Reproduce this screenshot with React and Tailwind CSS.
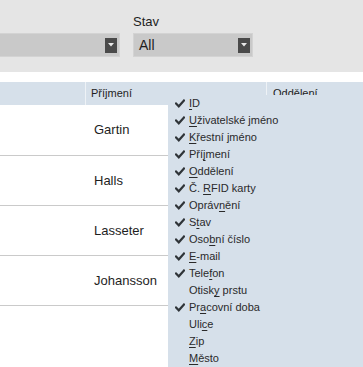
import React from "react";

const columns = [
  { label: "ID", checked: true },
  { label: "Uživatelské jméno", checked: true },
  { label: "Křestní jméno", checked: true },
  { label: "Příjmení", checked: true, idx: 3 },
  { label: "Oddělení", checked: true },
  { label: "Č. RFID karty", checked: true, idx: 3 },
  { label: "Oprávnění", checked: true, idx: 5 },
  { label: "Stav", checked: true, idx: 1 },
  { label: "Osobní číslo", checked: true, idx: 3 },
  { label: "E-mail", checked: true },
  { label: "Telefon", checked: true, idx: 4 },
  { label: "Otisky prstu", checked: false, idx: 5 },
  { label: "Pracovní doba", checked: true, idx: 2 },
  { label: "Ulice", checked: false, idx: 3 },
  { label: "Zip", checked: false },
  { label: "Město", checked: false },
];

const rows = ["Gartin", "Halls", "Lasseter", "Johansson"];

const Check = () => (
  <svg width="10" height="9" viewBox="0 0 10 9" className="shrink-0">
    <path d="M1 4.5 L3.8 7.3 L9 1.5" fill="none" stroke="#2f3438" strokeWidth="2.2" strokeLinecap="square" />
  </svg>
);

// underline the access-key letter
const Mnemonic = ({ label, idx = 0 }) => (
  <span>
    {label.slice(0, idx)}
    <span className="underline underline-offset-[2px]">{label[idx]}</span>
    {label.slice(idx + 1)}
  </span>
);

const Select = ({ value, className }) => (
  <div className={`h-[24px] bg-[#c9c9c9] border border-[#d3d3d3] flex items-center justify-between pl-[5px] pr-[2px] ${className}`}>
    <span className="text-[14px] text-[#1e1e1e]">{value}</span>
    <div className="w-[12px] h-[15px] bg-[#4a4a4a] flex items-center justify-center">
      <svg width="6" height="4" viewBox="0 0 6 4">
        <path d="M0 0 L6 0 L3 3.5 Z" fill="#e8e8e8" />
      </svg>
    </div>
  </div>
);

export default function App() {
  return (
    <div
      className="relative w-[363px] h-[367px] overflow-hidden bg-white"
      style={{ fontFamily: '"Liberation Sans", Arial, sans-serif' }}
    >
      {/* filter bar */}
      <div className="h-[72px] bg-[#e5e5e5] flex items-start gap-[13px] pt-[14px]">
        <div className="flex flex-col gap-[3px] -ml-[20px]">
          <div className="h-[16px]" />
          <Select value="" className="w-[140px]" />
        </div>
        <div className="flex flex-col gap-[3px]">
          <div className="h-[16px] text-[13px] leading-[16px] text-[#1e1e1e]">Stav</div>
          <Select value="All" className="w-[120px]" />
        </div>
      </div>
      <div className="h-[10px] bg-white" />

      {/* table */}
      <div className="flex h-[23px] bg-[#d6e0ea] text-[11px] text-[#1e1e1e]">
        <div className="w-[85px]" />
        <div className="w-[181px] border-l border-[#eef2f6] flex items-center pl-[5px]">Příjmení</div>
        <div className="flex-1 border-l border-[#eef2f6] flex items-center pl-[6px]">Oddělení</div>
      </div>
      {rows.map((name, i) => (
        <div
          key={name}
          className={`flex items-center border-b border-[#cacaca] ${i === 0 ? "h-[51px]" : "h-[50px]"}`}
        >
          <div className="w-[85px]" />
          <div className="pl-[9px] text-[13px] text-[#1e1e1e]">{name}</div>
        </div>
      ))}

      {/* column chooser menu */}
      <div className="absolute left-[168px] top-[95px] right-0 bottom-0 bg-[#d6e0ea] text-[11px] text-[#2a2a2a]">
        {columns.map((c) => (
          <div key={c.label} className="h-[17px] flex items-center pl-[7px] gap-[4px]">
            <div className="w-[10px] flex items-center">{c.checked && <Check />}</div>
            <Mnemonic label={c.label} idx={c.idx} />
          </div>
        ))}
      </div>
    </div>
  );
}
